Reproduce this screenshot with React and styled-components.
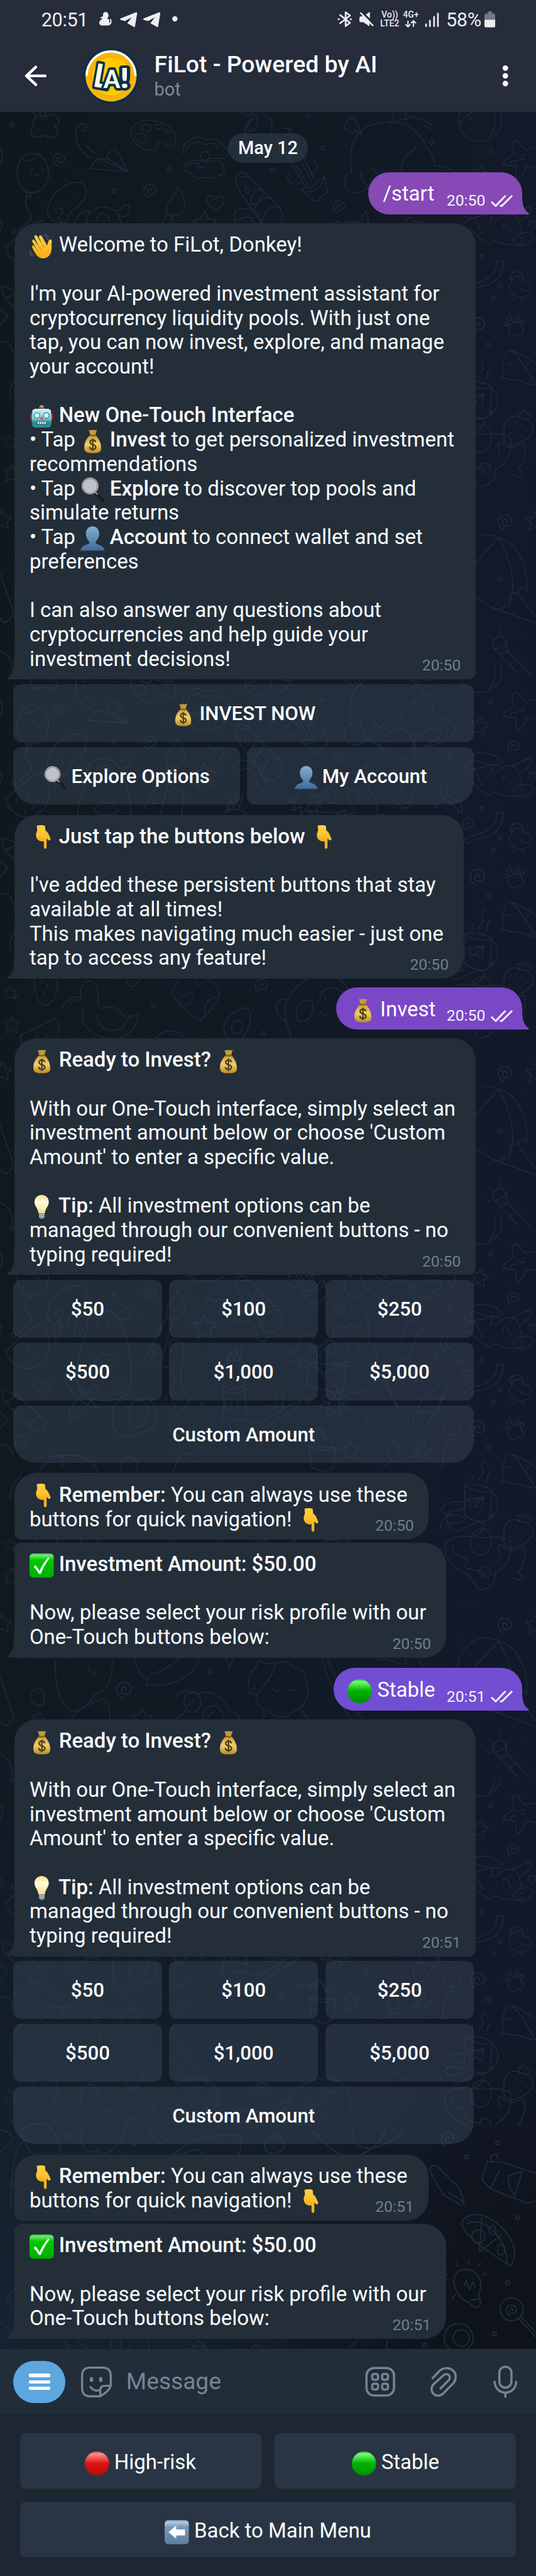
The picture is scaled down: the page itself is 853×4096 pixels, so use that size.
import React from "react";
import styled, { createGlobalStyle } from "styled-components";

const K = 0.8772;
const px = (n) => `${+(n * K).toFixed(3)}px`;

const Global = createGlobalStyle`
  html, body { margin: 0; background: #1d2631; }
  * { box-sizing: border-box; }
  svg { display: block; flex: none; }
`;

const Screen = styled.div`
  width: 853px;
  height: 4096px;
  overflow: hidden;
  display: flex;
  flex-direction: column;
  background: #1d2631;
  color: #fcfdff;
  font-family: Roboto, "Liberation Sans", sans-serif;
`;

/* ---------- header ---------- */
const Header = styled.header`
  height: ${px(203)};
  background: #262c3a;
  flex: none;
`;
const StatusBar = styled.div`
  height: ${px(71)};
  display: flex;
  align-items: center;
  padding: 0 ${px(74)} 0 ${px(75)};
  color: #e9ebef;
`;
const StatusText = styled.span`
  font-size: ${px(35)};
  line-height: ${px(40)};
  letter-spacing: ${(p) => px(p.$tight || 0)};
  width: ${(p) => px(p.$w)};
  white-space: nowrap;
`;
const Spacer = styled.div`
  flex: 1;
`;
const NetStack = styled.div`
  display: flex;
  flex-direction: column;
  align-items: center;
  width: ${(p) => px(p.$w)};
  margin-right: ${(p) => px(p.$gap)};
  font-size: ${px(16)};
  line-height: ${px(15.6)};
  font-weight: 500;
  white-space: nowrap;
`;
const TitleBar = styled.div`
  height: ${px(132)};
  display: flex;
  align-items: center;
  padding: ${px(1)} ${px(50)} 0 ${px(44)};
`;
const Titles = styled.div`
  margin-left: ${px(27)};
  flex: 1;
  white-space: nowrap;
`;
const Title = styled.div`
  font-size: ${px(42.6)};
  line-height: ${px(50)};
  padding-top: ${px(1)};
  font-weight: 500;
`;
const Subtitle = styled.div`
  font-size: ${px(33)};
  line-height: ${px(41)};
  padding-top: ${px(1)};
  color: #7c8b99;
`;

/* ---------- chat ---------- */
const Chat = styled.main`
  position: relative;
  height: ${px(4055)};
  flex: none;
  overflow: hidden;
  display: flex;
  flex-direction: column;
  align-items: flex-start;
  padding-top: ${px(39)};
  background:
    radial-gradient(ellipse 60% 16% at 100% 100%, #0e131a 20%, rgba(14, 19, 26, 0) 100%),
    radial-gradient(ellipse 90% 30% at 0% 100%, #152331 0%, rgba(21, 35, 49, 0) 100%),
    linear-gradient(95deg, #10181e 0%, #111923 45%, #131929 75%, #13182a 100%);
`;
const Wallpaper = styled.svg`
  position: absolute;
  left: 0;
  top: 0;
  width: ${px(972)};
  height: ${px(4055)};
`;
const DatePill = styled.div`
  position: relative;
  align-self: center;
  height: ${px(53)};
  padding: 0 ${px(18.5)};
  border-radius: ${px(27)};
  background: rgba(46, 62, 74, 0.6);
  font-size: ${px(33)};
  line-height: ${px(53)};
  font-weight: 500;
`;
const Bubble = styled.section`
  position: relative;
  display: flex;
  width: ${(p) => px(p.$w)};
  margin: ${(p) => px(p.$mt)} 0 0 ${(p) => (p.$out ? "auto" : px(26))};
  ${(p) => p.$out && `margin-right: ${px(25.5)};`}
  padding: ${(p) => (p.$out ? `${px(16.3)} ${px(17)} ${px(16.3)} ${px(26)}` : `${px(16)} ${px(27)} ${px(16)} ${px(27.5)}`)};
  border-radius: ${(p) => p.$r.map((n) => px(n)).join(" ")};
  background: ${(p) => p.$bg || "#232e39"};
`;
const Body = styled.div`
  flex: 1;
  min-width: 0;
  margin: ${px(1.5)} 0 ${px(-1.5)};
  font-size: ${px(37.6)};
`;
const Line = styled.div`
  height: ${px(44.15)};
  line-height: ${px(44.15)};
  white-space: pre;
  b {
    font-weight: 500;
  }
`;
const Time = styled.span`
  display: flex;
  align-items: center;
  align-self: flex-end;
  margin-bottom: ${px(-5.6)};
  font-size: ${px(28.2)};
  line-height: ${px(28)};
  color: ${(p) => (p.$out ? "#f6f1fb" : "#6f7f8e")};
`;
const TailSvg = styled.svg`
  position: absolute;
  bottom: 0;
  width: ${px(14)};
  height: ${px(40)};
  ${(p) => (p.$out ? `right: ${px(-13)}; transform: scaleX(-1);` : `left: ${px(-13)};`)}
`;
const ButtonGrid = styled.div`
  position: relative;
  display: flex;
  flex-direction: column;
  gap: ${px(9)};
  width: ${px(836)};
  margin: ${px(9)} 0 0 ${px(24)};
`;
const ButtonRow = styled.div`
  display: flex;
  gap: ${px(13)};
`;
const InlineButton = styled.button`
  flex: 1 1 0;
  height: ${px(104.6)};
  display: flex;
  align-items: center;
  justify-content: center;
  border: 0;
  padding: ${px(1.5)} 0 0;
  border-radius: ${px(14)};
  ${(p) => p.$bl && `border-bottom-left-radius: ${px(40)};`}
  ${(p) => p.$br && `border-bottom-right-radius: ${px(40)};`}
  background: rgba(60, 76, 92, 0.42);
  color: #fff;
  font-family: inherit;
  font-size: ${px(35.6)};
  font-weight: 500;
  white-space: pre;
`;

/* ---------- composer and reply keyboard ---------- */
const Composer = styled.footer`
  height: ${px(117)};
  flex: none;
  display: flex;
  align-items: center;
  padding: ${px(2)} ${px(34)} 0 ${px(24)};
  background: #222d3a;
  color: #768593;
`;
const MenuPill = styled.div`
  width: ${px(95)};
  height: ${px(76)};
  border-radius: ${px(38)};
  background: #5ea6de;
  display: flex;
  flex-direction: column;
  align-items: center;
  justify-content: center;
  gap: ${px(5.6)};
`;
const MenuBar = styled.i`
  width: ${px(39)};
  height: ${px(6.2)};
  border-radius: ${px(2)};
  background: #fff;
`;
const Placeholder = styled.div`
  flex: 1;
  margin-left: ${px(25)};
  font-size: ${px(42.3)};
  line-height: ${px(50)};
`;
const Keyboard = styled.div`
  display: flex;
  flex-direction: column;
  gap: ${px(24)};
  padding: ${px(36)} ${px(36)} 0;
`;
const KeyRow = styled.div`
  display: flex;
  gap: ${px(25)};
`;
const Key = styled.button`
  flex: 1 1 0;
  height: ${px(100)};
  display: flex;
  align-items: center;
  justify-content: center;
  border: 0;
  padding: ${px(3.5)} 0 0;
  border-radius: ${px(10)};
  background: #293544;
  color: #fff;
  font-family: inherit;
  font-size: ${px(37.6)};
  white-space: pre;
`;

/* ---------- emoji ---------- */
const EmojiSvg = styled.svg`
  display: inline-block;
  width: 1.17em;
  height: 1.17em;
  margin: -0.3em 0;
  vertical-align: -0.01em;
  overflow: visible;
`;

const art = {
  check: (
    <>
      <rect width="44" height="44" rx="7" fill="url(#gGreenSq)" />
      <path d="M7.5 24.5 10.5 21.5Q15 26 18 32 24 18 34 7L36 9Q26 22 20.500 37H17Q13 29 7.500 24.500Z" fill="#fff" />
    </>
  ),
  green: <circle cx="22" cy="22" r="22" fill="url(#gGreen)" />,
  red: <circle cx="22" cy="22" r="22" fill="url(#gRed)" />,
  left: (
    <>
      <rect width="44" height="44" rx="7" fill="url(#gBlueSq)" />
      <path d="M7 22 21 10V17H37V28H21V34Z" fill="#fff" />
    </>
  ),
  bag: (
    <>
      <path d="M15 1Q18 3.500 22 1.500 26 3.500 30 1L27 11H18Z" fill="#c39a3c" />
      <path d="M18 11C8 19 5 32 8 39 10 43 15 44 22 44S35 43 37 39C39 32 36 19 27 11Z" fill="url(#gGold)" />
      <path d="M17 10.500H28V13.500H17Z" fill="#8c6420" />
      <path d="M27.500 24C27 20.800 24.800 20 22.400 20 19.500 20 17.300 21.600 17.300 24.200 17.300 30 27.800 27 27.800 32.800 27.800 35.500 25.500 37 22.400 37 19.500 37 17.200 35.800 16.800 32.500M22.400 17.300V39.700" fill="none" stroke="#4b3a1c" strokeWidth="2.600" />
    </>
  ),
  lens: (
    <>
      <path d="M25 26 41 42" stroke="#1d1d1f" strokeWidth="6" strokeLinecap="round" />
      <path d="M25 25 31 31" stroke="#8b8f94" strokeWidth="3" />
      <circle cx="17.500" cy="15.500" r="14" fill="#bfc2c8" stroke="#71767d" strokeWidth="2.600" />
      <circle cx="17.500" cy="15.500" r="14.500" fill="none" stroke="#d9dde1" strokeWidth="1" />
    </>
  ),
  person: (
    <path d="M22 0C29 0 34 5 34 13 34 19 31 25 28 27V31C34 34 42 34 44 44H0C2 34 10 34 16 31V27C13 25 10 19 10 13 10 5 15 0 22 0Z" fill="url(#gPerson)" />
  ),
  down: (
    <>
      <path d="M13 1Q21-1 28 1L29 10C33 12 35 17 38 24 39 27 36 28.500 34 27L31 24 31 41Q29 45 26 41V29C18 31 12 25 12 19 11 15 14 12 14 8Z" fill="url(#gHand)" />
      <path d="M17 21V27M21.500 22V29M26 23V30" stroke="#e39a12" strokeWidth="1.200" fill="none" />
    </>
  ),
  bulb: (
    <>
      <path d="M22 0C30 0 35 6 35 13 35 20 28 25 28 33H16C16 25 9 20 9 13 9 6 14 0 22 0Z" fill="url(#gBulb)" />
      <path d="M17 33H27.500L27 41Q22 46 17.500 41Z" fill="#8d8f92" />
      <path d="M17 36H27M17 39H27" stroke="#c9cbce" strokeWidth="1.200" />
    </>
  ),
  wave: (
    <>
      <path d="M14 40C10 34 4 25 4.500 22 6 19 8 21 9 23L13 28 5 14C4 10 8 9 9.500 12L17 23 9 6C8 2 12 1 14 4L23 19 17 6C17 2 21 1 23 5L32 21C33 17 34 10 38 10 42 11 40 16 40 21 41 31 38 41 29 43.500 23 45 18 44 14 40Z" fill="url(#gHand)" />
      <path d="M17 23 21 28M23 19 26 25M13 28 17 33" stroke="#d98e10" strokeWidth="1.300" fill="none" />
      <path d="M25 2Q31 5 34 11M28 0Q33 3 35 7M0 29Q2 36 8 39M0 34Q2 39 5 41" stroke="#55606b" strokeWidth="1.300" fill="none" />
    </>
  ),
  robot: (
    <>
      <path d="M18 8V4Q22-2 26 4V8Z" fill="#f2a52c" />
      <path d="M17 5H27V9H17Z" fill="#69558f" />
      <path d="M2 19Q2 16 5 16V28Q2 28 2 25ZM42 19Q42 16 39 16V28Q42 28 42 25Z" fill="#d2333a" />
      <path d="M5 12Q6 8 12 8H32Q38 8 39 12L40 33Q40 42 33 42H11Q4 42 4 33Z" fill="url(#gRobot)" />
      <circle cx="13.500" cy="20" r="5" fill="#e7ffff" stroke="#20a8bd" strokeWidth="2" />
      <circle cx="30.500" cy="20" r="5" fill="#e7ffff" stroke="#20a8bd" strokeWidth="2" />
      <path d="M22 21 25 27H19Z" fill="#e0453e" />
      <path d="M14 31H30V36H14Z" fill="#e8f5f5" stroke="#2d5c66" strokeWidth="1" />
      <path d="M18 31V36M22 31V36M26 31V36" stroke="#2d5c66" strokeWidth="1.200" />
    </>
  ),
};
const Emoji = ({ n }) => (
  <EmojiSvg viewBox="0 0 44 44" aria-hidden="true">
    {art[n]}
  </EmojiSvg>
);

const Grad = ({ id, stops }) => (
  <linearGradient id={id} x1="0" y1="0" x2="0" y2="1">
    {stops.map(([o, c]) => (
      <stop key={o} offset={o} stopColor={c} />
    ))}
  </linearGradient>
);

/* ---------- wallpaper doodles ---------- */
const Swirl = ({ x, y, s = 1 }) => (
  <path transform={`translate(${x} ${y}) scale(${s})`} d="M-2 12C-10 10-12 0-8-6-3-12 8-10 10-2 11 6 3 9-2 6-5 3-4-2 0-3 3-3 4 0 2 2" />
);
const Star = ({ x, y, s = 1, r = 0 }) => (
  <path transform={`translate(${x} ${y}) rotate(${r}) scale(${s})`} d="M0-17Q2-16 5-6L16-5Q17-3 8 4L11 15Q9 17 0 10L-10 16Q-12 14-7 4L-16-4Q-15-6-5-6Z" />
);
const Heart = ({ x, y, s = 1, r = 0 }) => (
  <path transform={`translate(${x} ${y}) rotate(${r}) scale(${s})`} d="M0 14C-10 8-18 0-15-8-12-15-3-13 0-5 4-14 14-14 16-6 17 2 8 9 0 14Z" />
);
const Dots = ({ at }) => at.map(([x, y]) => <circle key={`${x}-${y}`} cx={x} cy={y} r="3.500" />);

const DoodleTile = () => (
  <g id="doodles">
    <Dots at={[[22, 226], [207, 346], [307, 307], [558, 211], [585, 268], [494, 308], [783, 259], [891, 273], [816, 372], [414, 465], [874, 466], [908, 519], [895, 541], [886, 624], [280, 453], [366, 545], [527, 451], [663, 575], [892, 748], [30, 806], [278, 822], [478, 873], [908, 1050], [382, 1030], [25, 420], [790, 460], [510, 622], [558, 540], [300, 535]]} />
    <Swirl x={107} y={288} />
    <Swirl x={272} y={345} s={1.1} />
    <Swirl x={615} y={374} />
    <Swirl x={931} y={353} />
    <Swirl x={849} y={493} />
    <Swirl x={866} y={588} s={1.3} />
    <Swirl x={474} y={786} s={1.1} />
    <Swirl x={916} y={945} s={1.2} />
    <Swirl x={225} y={1062} s={1.3} />
    <Swirl x={219} y={517} />
    <Swirl x={37} y={613} />
    <Heart x={391} y={367} />
    <Heart x={77} y={513} s={0.9} />
    <Heart x={362} y={775} s={0.8} r={20} />
    <Heart x={338} y={812} s={0.8} r={-20} />
    <Heart x={741} y={500} r={10} />
    <Star x={870} y={315} r={10} />
    <Star x={371} y={405} s={1.3} />
    <Star x={635} y={629} />
    <Star x={765} y={628} r={15} />
    <Star x={21} y={858} s={0.9} />
    <Star x={971} y={945} />
    <Star x={4} y={942} />
    <Star x={258} y={1115} s={1.1} />
    <Star x={18} y={800} s={0.7} />
    {/* broccoli, hooked cane, palette */}
    <path d="M62 203 66 215M72 203 76 216M80 203 85 212M62 226C57 212 72 205 82 212 96 200 112 214 105 226 104 232 96 233 99 226M62 226C53 232 55 247 65 249 72 249 80 244 82 246 92 254 106 248 104 238 102 232 99 228 99 226" />
    <path d="M149 237C160 237 160 222 147 225 134 230 136 255 145 268 150 278 158 284 169 287M156 264 172 279" />
    <path d="M238 244C236 226 256 215 280 219 305 222 322 240 319 254 316 268 306 266 298 260 290 254 286 258 284 266 280 276 266 274 255 267 246 261 239 254 238 244ZM256 232A9 6 0 1 0 275 232 9 6 0 1 0 256 232M246 249A10 7 20 1 0 265 251 10 7 20 1 0 246 249M281 229A6 4 10 1 0 293 230 6 4 10 1 0 281 229M299 237A5 3 10 1 0 309 239 5 3 10 1 0 299 237" />
    {/* paper plane, balloon, cucumber */}
    <path d="M163 306 232 311 210 270 195 278 194 287Q187 291 178 287 168 296 163 306M178 287 232 311 194 286" />
    <path d="M59 278C78 278 88 296 88 314 88 334 76 349 59 349 42 349 30 334 31 314 31 296 41 278 59 278ZM44 291Q54 294 62 287M58 304V313M77 304 76 311M64 316Q68 321 71 316M50 356 47 350 55 349 56 357ZM49 356C38 374 60 384 56 398 52 406 36 408 33 420" />
    <path d="M118 404C84 404 78 384 96 356 112 334 142 324 153 336 162 350 154 366 134 380 124 388 124 392 123 400ZM103 385h1M113 374h1M122 364h1M133 353h1" />
    {/* bird */}
    <path d="M136 405C140 388 152 380 163 383 158 390 160 398 150 412 140 430 130 426 136 405M163 387C176 368 214 370 220 405 236 430 240 460 236 520 230 545 150 545 145 520 130 480 150 440 160 400M210 380C228 384 220 368 232 372 242 382 230 398 216 391M176 400A10 12 0 0 1 198 400M170 470Q190 485 216 470M170 470C180 450 205 450 214 470" />
    {/* clam and croissant */}
    <path d="M333 279C328 260 344 254 348 252 360 244 370 252 374 254 388 248 402 256 402 264 414 268 420 278 410 284 404 290 394 286 380 287M338 276C336 262 352 260 354 258 362 254 368 262 373 262 386 254 396 266 396 270M364 283A8 8 0 1 1 380 283 8 8 0 1 1 364 283M333 304C336 290 352 290 364 291 378 298 392 286 402 296 410 308 408 318 396 318 386 326 374 320 368 322 356 326 350 318 346 314 338 312 332 308 333 304M340 302C344 296 356 294 362 296 352 304 362 304 370 302" />
    <path d="M430 318C436 308 448 314 454 322L498 366C510 376 516 390 510 402 496 426 480 416 468 396L432 342Q426 328 430 318ZM444 344A5 5 0 1 0 454 344 5 5 0 1 0 444 344M456 370C450 356 466 350 462 344 472 338 482 350 474 356 470 370 460 372 456 370M462 380C466 364 482 356 488 360M476 402C478 384 490 370 506 376M436 322Q448 318 456 324" />
    {/* cactus */}
    <path d="M546 342 566 340Q586 318 590 322L594 348 577 363 570 365ZM546 342C546 348 560 352 574 342 586 334 590 326 586 318M554 338 526 292C520 276 540 264 546 276L572 328M546 330C524 344 516 318 526 312M562 310C576 318 580 300 570 292M538 300 560 336M548 296 566 330" />
    {/* soft serve */}
    <path d="M438 203C444 215 460 212 460 203M456 205C476 212 468 240 452 238 446 232 450 222 460 216M478 208C500 216 496 240 484 256 470 262 448 262 445 240 442 224 452 220 460 214M512 232 528 234Q520 252 504 256" />
    {/* whale */}
    <path d="M638 316C630 270 640 222 706 221 742 222 762 240 775 268 784 276 788 290 788 300M638 311C618 318 622 350 642 350 660 350 668 340 674 334M788 301C812 300 826 310 826 318 826 336 800 350 768 354M706 226C716 218 714 210 714 203M718 220C730 212 726 218 738 216 738 210 736 206 735 203M656 243C650 230 648 218 640 214 628 216 624 226 626 234 632 228 632 244 642 240 644 232 648 244 656 243M742 212Q766 214 783 226M770 228 784 234M728 312C728 292 736 276 754 272M754 266 746 276M654 312C656 334 676 348 690 352M676 304Q684 320 700 322M706 330C712 316 740 316 744 336 750 350 758 362 750 376 736 382 708 374 704 358M694 310 706 318M704 346C694 340 684 346 692 352 684 356 692 360 704 360M742 336C754 322 760 330 750 342 756 352 752 360 746 350M756 344 770 326C784 316 800 320 800 330 798 342 780 346 768 354" />
    {/* brush and bolt */}
    <path d="M304 384C296 366 320 356 321 340 334 350 340 374 330 386 320 392 308 390 304 384M304 384 260 470M314 390 290 480M300 388 314 394M548 420 530 470 546 462 544 480 578 440 562 444 572 418Z" />
    {/* beach ball, starfish */}
    <circle cx="871" cy="217" r="39" />
    <path d="M834 225Q842 208 858 203M896 203Q902 232 888 250M848 208 856 216" />
    <path d="M929 261Q930 252 939 257L953 272Q960 270 972 268M929 261 932 279Q914 290 913 298 924 300 936 302C934 316 938 328 943 321 950 316 954 306 954 300L972 304M925 295Q932 290 938 292M938 282v3M950 279v3M944 288q4 3 8-1" />
    {/* napping figure in a hat */}
    <path d="M855 374C856 358 905 364 911 382 908 392 868 384 855 374ZM855 374C858 398 838 380 843 392 846 400 880 390 888 386M860 394C830 410 836 410 858 420 876 436 890 450 896 436 920 446 940 446 950 440M860 394C872 412 868 420 878 425M888 405C896 396 892 386 888 386M896 402C910 396 920 378 940 396 944 406 942 416 950 424M920 388C934 392 954 372 963 376 968 384 950 398 944 402M914 412C910 400 928 408 926 424M932 438C930 420 970 416 966 432 962 446 942 450 932 438ZM962 410C954 402 964 394 966 404 972 394 976 406 966 416M942 430q4 5 9 0" />
    {/* ribbons */}
    <path d="M808 413C796 430 796 446 818 458 830 464 832 468 831 473L838 473C840 454 828 450 816 444 806 436 808 428 815 420ZM901 474 912 473C916 496 900 512 880 518 860 522 856 522 848 530L842 524C854 508 866 518 886 504 898 496 902 486 901 474Z" />
    <path d="M802 660C806 640 800 632 812 610M790 575C800 560 792 545 804 530" />
    {/* chick, paw, shark */}
    <path d="M929 507C934 496 948 500 950 510 962 510 966 520 962 532 954 542 930 542 925 526 922 514 928 510 931 511 920 504 926 496 932 494 938 490 948 494 950 504M924 504 930 506M944 522Q952 532 960 524M932 540V546M948 539V546M936 501h1" />
    <path d="M923 595C924 582 944 578 946 592 954 600 948 608 938 606 928 614 920 606 923 595M914 588a4 3 0 1 0 8 0 4 3 0 1 0-8 0M920 577a4 5 0 1 0 8 0 4 5 0 1 0-8 0M934 576a4 5 0 1 0 8 0 4 5 0 1 0-8 0M943 583a4 3 0 1 0 8 0 4 3 0 1 0-8 0" />
    <path d="M972 698C950 696 944 686 930 690 920 686 916 684 907 687M912 684C910 660 914 640 924 636 940 636 958 650 972 660M930 638C946 650 960 680 972 697M918 658Q924 664 930 656M960 656 957 662" />
    {/* mug with steam */}
    <path d="M844 692C850 688 890 694 893 704L888 754C880 762 850 756 842 744ZM844 692C856 704 880 706 893 704M892 706C908 712 908 744 889 750M846 718 878 714 874 736 862 730 853 733 852 724ZM852 724 878 714 862 730M858 684C852 680 862 676 856 672M870 684C866 676 884 668 874 662 872 656 876 652 879 650M882 688C888 682 880 676 890 668" />
    {/* strawberry, cats */}
    <path d="M914 790C912 760 926 748 944 758 962 756 970 776 966 784 954 800 930 812 916 802ZM944 758C936 748 942 744 946 750 946 742 950 740 954 750 964 748 968 752 958 760M924 770v2M936 766v2M948 772v2M926 784v2M940 782v2M956 780v2M932 794v2M946 790v2" />
    <path d="M816 748C790 740 800 722 834 722 850 724 842 738 830 738 810 736 800 760 826 776 840 776 856 756 878 760 880 770 870 782 860 784M808 800C820 780 852 784 876 788 900 784 905 786 926 792 930 820 920 840 900 850 890 860 910 866 880 880 860 890 866 860 840 850 812 838 806 820 808 800M856 790a18 20 0 1 0 34 10 18 20 0 1 0-34-10M906 820C900 800 908 796 914 806L926 812 950 804C956 820 950 840 940 850 955 860 950 870 930 860M820 802C826 830 846 816 848 830 830 850 870 840 880 856M870 850a10 10 0 1 0 20 0 10 10 0 1 0-20 0" />
    {/* umbrella, flashlight */}
    <path d="M825 1055C826 990 860 955 906 975 945 985 960 1040 955 1072 948 1060 940 1066 940 1076 930 1070 920 1080 925 1095 912 1100 905 1110 890 1100L825 1055M905 975C870 1010 850 1040 825 1055M905 975C930 1020 935 1060 925 1095M890 1100 972 1130M940 1076 972 1120" />
    <path d="M895 1175C890 1160 905 1145 916 1160L920 1180 962 1222M895 1175 908 1186 940 1222M895 1175Q912 1178 920 1160M908 1186 922 1180M926 1204 938 1196M908 1150 909 1140M894 1158 888 1152M882 1174 888 1176" />
    {/* pencil, carrot */}
    <path d="M3 518 8 540 60 592Q76 602 84 590L80 574 30 528ZM8 540Q20 540 30 528M54 588Q60 570 74 568" />
    <path d="M120 490C140 500 160 540 178 552M178 552C150 550 130 530 116 496M124 560C140 530 160 520 180 510 170 540 150 560 130 574ZM10 450C30 430 60 400 76 400 98 430 92 460 70 474 50 488 20 480 10 450ZM30 448v6M50 440v6M60 460v6M46 470v4" />
    <path d="M100 380C120 370 116 390 104 396 120 400 110 414 104 430M100 430 98 410" />
    {/* egg, flask, thunder cloud, llama and guitar */}
    <path d="M205 570C200 540 230 530 250 536 280 530 290 560 280 580 280 600 250 590 240 606 220 606 200 596 205 570ZM236 560a16 18 0 1 0 30 4 16 18 0 1 0-30-4M246 562v4M258 560v4M248 572q5 5 9-1" />
    <path d="M306 440C310 420 330 430 334 446 330 480 320 510 340 530 350 540 330 560 310 570 300 600 320 610 345 590M296 480C310 470 322 490 312 520 306 540 322 550 320 560" />
    <path d="M426 400C420 378 436 376 450 380 466 376 474 396 476 410L486 420C488 430 478 434 470 430 466 428 464 426 466 416L456 396C446 390 440 396 426 400Z" />
    <path d="M410 460 430 440M414 470 420 450 424 468 430 446 434 466 440 440M406 480C400 466 448 460 446 480 444 500 440 530 450 560L440 560M406 500C404 530 410 560 402 580M406 512Q424 524 446 510M406 520Q424 532 446 518M408 540 412 560M420 540V560M430 540 434 560M416 580C440 560 460 590 480 576L520 550 545 540C540 560 520 560 500 575 480 590 450 620 420 600Z" />
    <path d="M486 530C486 520 500 520 500 530V552M500 530 514 524V546M486 552a5 4 0 1 0 10 0 5 4 0 1 0-10 0M504 548a5 4 0 1 0 10 0 5 4 0 1 0-10 0" />
    {/* dinosaur, envelope, flower, bone */}
    <path d="M574 472C572 440 590 430 606 420 604 404 612 392 622 410 630 398 644 400 650 406L664 382C672 400 666 420 668 430 690 450 690 500 670 520 650 530 600 530 574 472ZM600 430a10 13 0 1 0 0 26 10 13 0 1 0 0-26M640 432a10 14 0 1 0 0 28 10 14 0 1 0 0-28M606 470q16 12 40 2" />
    <path d="M560 470 610 474 628 468 622 526 556 512ZM560 470 588 490 628 468M582 466C576 450 590 440 596 450" />
    <path d="M597 545a10 10 0 1 0 20 0 10 10 0 1 0-20 0M600 536C588 520 600 514 607 533 612 512 622 518 615 536 634 524 638 536 620 546 638 550 636 560 616 554 624 570 610 574 606 556 596 574 586 564 598 552 576 556 576 544 596 544 576 536 586 524 600 536" />
    <path d="M736 410C730 394 750 390 754 402 770 398 772 416 758 418L744 448C750 462 734 472 726 458 712 462 712 444 724 442Z" />
    <path d="M680 500C670 480 690 470 700 480 710 500 694 512 690 504M694 504 722 550M700 500 718 548M770 530 798 510C810 500 814 520 806 530L770 590C756 600 744 580 752 566ZM764 534Q780 530 806 536M756 560Q776 556 790 566" />
    <path d="M530 600 572 598 590 604 580 590 560 596M560 622 566 660 588 668 604 660 610 624ZM560 622C574 630 598 632 610 624M572 618C556 600 570 594 576 612 570 580 588 576 590 612 600 590 614 596 600 618M806 590C800 560 830 560 836 580 830 610 814 604 806 590M820 600 824 620M690 660C720 650 730 630 718 612 700 610 696 640 714 650 740 650 760 630 770 620" />
    {/* left margin leaf shapes */}
    <path d="M0 270C10 280 0 290 0 300M0 420Q8 410 0 400M0 560 14 572 0 590M0 620Q18 615 24 640M0 1040 25 1110Q10 1140 0 1120M0 1180Q26 1190 22 1223" />
    <path d="M60 690C80 640 90 660 95 640 112 630 118 650 112 660M90 640C120 640 180 620 182 700M310 690C316 650 330 620 350 640M220 660a15 18 0 1 0 30 0 15 18 0 1 0-30 0M40 670Q15 700 18 720" />
    {/* lizard and stork row */}
    <path d="M62 760C60 800 70 830 88 820 106 810 108 780 98 760M76 776v6M86 784v6M80 798v6" />
    <path d="M112 828C124 806 136 806 148 808 140 784 160 770 174 784 184 800 170 824 184 828 206 820 220 830 226 846L250 840C252 860 230 884 204 884 170 880 140 860 152 826M176 838C174 860 196 876 222 864 230 854 228 848 240 840M128 818 148 810" />
    <path d="M312 800C320 770 340 764 350 770 372 764 392 780 398 800 396 820 376 836 364 850 340 836 322 820 312 800ZM372 840C368 820 380 810 390 808M228 760C224 780 240 800 250 780 260 770 262 764 258 760" />
    <path d="M406 864C410 840 430 830 446 826 460 830 454 860 442 880 424 892 408 884 406 864ZM420 862a10 12 0 1 0 20 0 10 12 0 1 0-20 0" />
    <path d="M518 850C490 840 500 800 522 814 530 790 560 764 600 768 628 774 640 800 634 830M518 820C516 850 524 880 540 900M540 850C530 830 550 804 566 816 572 840 556 858 540 850ZM580 812C580 788 610 786 622 800M582 835q6 10 14 2M556 820v5M590 808v5" />
    <path d="M36 878 98 846C110 850 108 862 104 880M44 900Q40 890 36 878M66 876a8 8 0 1 0 18 0M276 890C290 862 330 862 340 890M296 880v2M310 874v2M320 884v2" />
    <path d="M696 776C702 760 714 770 716 758 726 760 724 772 736 766M800 772C796 744 830 742 842 752 844 764 826 760 812 762" />
    {/* sheep and snail row */}
    <path d="M100 1010C100 1060 110 1096 134 1102 160 1096 166 1080 172 1072 196 1066 204 1040 204 1008M160 1020C164 1038 176 1040 174 1024M56 1070C66 1050 84 1060 80 1090 68 1094 52 1088 56 1070" />
    <path d="M242 1000C248 1030 256 1040 270 1044L264 1054C310 1060 350 1040 362 1008M274 1034C300 1030 320 1010 330 1002M408 1000 416 1024 426 1000" />
    <path d="M450 1060C450 1040 456 1030 466 1020 462 1010 474 1008 476 1014 486 1018 500 1010 498 1020 496 1040 480 1050 470 1070 456 1074 448 1068 450 1060ZM498 1020C510 1004 530 1016 534 1024 556 1020 556 1050 558 1060 562 1090 540 1100 530 1104 520 1118 490 1110 486 1100 470 1100 460 1080 466 1072M456 1060q4 6 7-2M480 1106 476 1120M546 1100 560 1118M520 1060q10 10 16-2M494 1060q6 10 12 4" />
    <path d="M320 1076C320 1066 340 1062 360 1070 390 1060 412 1086 416 1100 434 1106 438 1116 430 1130M334 1086a15 18 0 1 0 30 0 15 18 0 1 0-30 0M368 1112a18 20 0 1 0 36 0 18 20 0 1 0-36 0M310 1130C316 1110 330 1116 336 1100M376 1112 390 1102M340 1092 350 1082" />
    <path d="M126 1130C130 1100 160 1090 184 1080 198 1080 200 1110 202 1130M136 1120a10 12 0 1 0 20 0M156 1120a14 16 0 1 0 26 0M56 1130C60 1100 78 1100 80 1120" />
    <path d="M682 1010C700 1000 720 1020 738 1016 736 1004 730 1000 726 1000M584 1003C590 1040 630 1120 660 1140M594 1003C600 1040 660 1120 674 1140M760 1010 780 1040" />
  </g>
);

const FooterDoodles = () => (
  <g stroke="#20303e">
    <Dots at={[[121, 3872], [244, 3885], [903, 3884], [846, 3910], [939, 4020], [921, 4138], [897, 4230], [770, 4251], [22, 3960]]} />
    <Swirl x={812} y={3876} s={1.1} />
    <path d="M60 3905C30 3870 30 3850 70 3850 100 3850 110 3890 112 3906M20 4000C20 3920 30 3880 50 3878M0 3860C30 3870 30 3880 0 3900M150 3860C140 3890 160 3905 178 3900 200 3915 220 3880 228 3860M270 3860C280 3900 310 3885 310 3860M315 3905C340 3880 380 3868 430 3870 445 3875 436 3890 434 3905M330 3904 356 3896 370 3904M480 3890C480 3865 516 3865 516 3890 512 3905 480 3910 480 3890M562 3860C600 3890 600 3905 640 3910 680 3900 690 3880 700 3860M640 3860Q630 3890 670 3895 720 3885 730 3860" />
    <path d="M780 3932C790 3910 810 3950 828 3960 840 3975 840 3990 842 3998M780 3932C784 3950 800 3970 806 3980M806 3980 838 3998M814 3974 842 3992M884 3918 912 3920 972 3940M884 3918 874 3950 890 3968 958 3994 972 3990M890 3968 906 3934M922 3944 948 3936 940 3960 934 3980 924 3964ZM891 3920V3908L900 3904 904 3916" />
    <path d="M838 4032C840 4010 880 4006 908 4036 934 4060 940 4090 926 4108 900 4090 846 4060 838 4032ZM846 4032C870 4014 920 4050 920 4104M874 4020 870 4082 910 4050M856 4054a12 12 0 1 0 24 0 12 12 0 1 0-24 0M888 4044a6 6 0 1 0 11-2 6 6 0 1 0-11 2M904 4078a6 6 0 1 0 10 0 6 6 0 1 0-10 0" />
    <path d="M840 4168C820 4150 816 4120 840 4114 866 4110 880 4140 868 4156L872 4176C868 4184 860 4186 854 4176ZM854 4170 872 4166M842 4144 846 4134 852 4150 858 4136 862 4146M850 4102V4096M830 4108 828 4102M868 4108 872 4102M826 4160 820 4166M876 4124 882 4120M812 4124 806 4120" />
    <path d="M907 4186a21 21 0 1 0 42 0 21 21 0 1 0-42 0M946 4200 972 4228M942 4204 972 4236" />
    <Swirl x={928} y={4187} s={0.9} />
    <circle cx="832" cy="4238" r="26" />
    <circle cx="837" cy="4238" r="15" />
    <path d="M116 4243 128 4260M140 4243 160 4260M202 4243V4260M220 4243V4260M236 4243V4260M264 4243Q274 4250 270 4260M344 4260 360 4243 378 4260M352 4254H372M632 4258 648 4242M704 4260Q698 4250 704 4242M456 4258C460 4250 472 4250 476 4258M0 4210Q22 4220 22 4240M14 4170C14 4150 26 4160 26 4150M14 4170 26 4180" />
  </g>
);

const ChatWallpaper = () => (
  <Wallpaper viewBox="0 203 972 4055" preserveAspectRatio="none" fill="none" stroke="#1e2939" strokeWidth="1.900" strokeLinecap="round" strokeLinejoin="round">
    <defs>
      <clipPath id="tileClip">
        <rect x="0" y="203" width="972" height="1020" />
      </clipPath>
      <clipPath id="shortClip">
        <rect x="0" y="223" width="972" height="630" />
      </clipPath>
    </defs>
    <g clipPath="url(#tileClip)">
      <DoodleTile />
    </g>
    <g transform="translate(0 1000)">
      <g clipPath="url(#tileClip)">
        <use href="#doodles" />
      </g>
    </g>
    <g transform="translate(0 2000)">
      <g clipPath="url(#tileClip)">
        <use href="#doodles" />
      </g>
    </g>
    <g transform="translate(0 3000)">
      <g clipPath="url(#shortClip)">
        <use href="#doodles" />
      </g>
    </g>
    <FooterDoodles />
  </Wallpaper>
);

/* ---------- message pieces ---------- */
const Tail = ({ out, fill = "#232e39" }) => (
  <TailSvg $out={out} viewBox="0 0 14 40" aria-hidden="true">
    <path d="M14 0H13C13 20 11 31 1.500 37 0 38.500 1 40 3 40H14Z" fill={fill} />
  </TailSvg>
);

const Incoming = ({ w, mt, r, time, tail = true, children }) => (
  <Bubble $w={w} $mt={mt} $r={r}>
    {tail && <Tail />}
    <Body>{children}</Body>
    <Time>{time}</Time>
  </Bubble>
);

const ReadTicks = styled.svg`
  width: ${px(40)};
  height: ${px(22)};
  margin-left: ${px(9.5)};
`;

const Outgoing = ({ w, mt, bg, time, children }) => (
  <Bubble $out $w={w} $mt={mt} $bg={bg} $r={[38, 38, 0, 38]}>
    <Tail out fill={bg} />
    <Body>
      <Line>{children}</Line>
    </Body>
    <Time $out>
      {time}
      <ReadTicks viewBox="0 0 40 22" fill="none" stroke="#f6f1fb" strokeWidth="3.200" strokeLinecap="round" strokeLinejoin="round">
        <path d="M2 13 9 20 26 2M18 19.500 20 20 38 2" />
      </ReadTicks>
    </Time>
  </Bubble>
);

const InvestPrompt = ({ mt, time }) => (
  <>
    <Incoming w={837} mt={mt} r={[40, 40, 13, 0]} time={time}>
      <Line><Emoji n="bag" /><b> Ready to Invest? </b><Emoji n="bag" /></Line>
      <Line />
      <Line>With our One-Touch interface, simply select an</Line>
      <Line>investment amount below or choose 'Custom</Line>
      <Line>Amount' to enter a specific value.</Line>
      <Line />
      <Line><Emoji n="bulb" /><b> Tip:</b> All investment options can be</Line>
      <Line>managed through our convenient buttons - no</Line>
      <Line>typing required!</Line>
    </Incoming>
    <ButtonGrid>
      <ButtonRow>
        <InlineButton>$50</InlineButton>
        <InlineButton>$100</InlineButton>
        <InlineButton>$250</InlineButton>
      </ButtonRow>
      <ButtonRow>
        <InlineButton>$500</InlineButton>
        <InlineButton>$1,000</InlineButton>
        <InlineButton>$5,000</InlineButton>
      </ButtonRow>
      <ButtonRow>
        <InlineButton $bl $br>Custom Amount</InlineButton>
      </ButtonRow>
    </ButtonGrid>
    <Incoming w={752} mt={18.5} r={[40, 40, 40, 13]} time={time} tail={false}>
      <Line><Emoji n="down" /><b> Remember:</b> You can always use these</Line>
      <Line>buttons for quick navigation! <Emoji n="down" /></Line>
    </Incoming>
    <Incoming w={783} mt={5.3} r={[13, 40, 40, 0]} time={time}>
      <Line><Emoji n="check" /><b> Investment Amount: $50.00</b></Line>
      <Line />
      <Line>Now, please select your risk profile with our</Line>
      <Line>One-Touch buttons below:</Line>
    </Incoming>
  </>
);

const Avatar = () => (
  <svg width={px(102)} height={px(102)} viewBox="0 0 100 100">
    <circle cx="50" cy="50" r="50" fill="#07304a" />
    <circle cx="50" cy="50" r="45.500" fill="#f9b40c" />
    <path d="M6.500 50A43.500 43.500 0 0 1 93.500 50" fill="none" stroke="#fff" strokeWidth="4" />
    <circle cx="50" cy="51" r="35" fill="#fecb00" stroke="#f8a90e" strokeWidth="2" />
    <g fontFamily="Lato, Roboto, sans-serif" fontWeight="900" fill="#fbfbea" stroke="#07304a" strokeWidth="9" strokeLinejoin="round" style={{ paintOrder: "stroke" }}>
      <text x="20" y="71" fontSize="58" transform="rotate(10 32 50)" textLength="27" lengthAdjust="spacingAndGlyphs">L</text>
      <text x="65" y="72" fontSize="49" textLength="18" lengthAdjust="spacingAndGlyphs">!</text>
      <text x="37" y="71" fontSize="45" textLength="29" lengthAdjust="spacingAndGlyphs">A</text>
    </g>
  </svg>
);

const LeftStatusIcons = () => (
  <svg width={px(150)} height={px(34)} viewBox="178 19 150 34" fill="#eceef2">
    <path d="M187 27C187 22 195 20 197 27 198 31 195 33 195 34 199 36 199 40 198 43L201 40 199 36 202 35V38C204 40 202 45 197 47H184C178 44 180 39 184 36L186 34 181 33 187 30Z" />
    <path d="M219 34 247 23Q249 23 249 25L245 49Q244 51 242 49L231 43 239 32 227 39 219 37Q217 35 219 34Z" />
    <path d="M261 34 289 23Q291 23 291 25L287 49Q286 51 284 49L273 43 281 32 269 39 261 37Q259 35 261 34Z" />
    <circle cx="317.500" cy="35" r="4.800" />
  </svg>
);

const BackArrow = styled.svg`
  width: ${px(40)};
  height: ${px(38)};
  margin-right: ${px(67)};
`;
const RadioIcons = styled.svg`
  width: ${px(76)};
  height: ${px(34)};
  margin-right: ${px(2)};
`;
const SignalIcon = styled.svg`
  width: ${px(28)};
  height: ${px(30)};
  margin-right: ${px(12)};
`;
const ComposerIcon = styled.svg`
  width: ${(p) => px(p.$w)};
  height: ${(p) => px(p.$h)};
  margin-left: ${(p) => px(p.$ml || 0)};
`;

export default function App() {
  return (
    <Screen>
      <Global />
      <svg width="0" height="0" style={{ position: "absolute" }} aria-hidden="true">
        <defs>
          <Grad id="gGreen" stops={[["0", "#1fb81f"], ["0.1", "#74ff74"], ["0.48", "#00b400"], ["1", "#008c00"]]} />
          <Grad id="gRed" stops={[["0", "#e0423c"], ["0.1", "#ff8f8a"], ["0.48", "#e01414"], ["1", "#a80f0f"]]} />
          <Grad id="gGreenSq" stops={[["0", "#3fbf3f"], ["0.08", "#72e872"], ["0.28", "#00c800"], ["1", "#00ad00"]]} />
          <Grad id="gBlueSq" stops={[["0", "#6d8fae"], ["0.08", "#b4cbe0"], ["0.3", "#7599bd"], ["1", "#5c7f9f"]]} />
          <Grad id="gGold" stops={[["0", "#c69a33"], ["0.5", "#f0cf68"], ["1", "#b98a26"]]} />
          <Grad id="gPerson" stops={[["0", "#7fb0d3"], ["1", "#41699b"]]} />
          <Grad id="gHand" stops={[["0", "#ffd046"], ["1", "#fbae14"]]} />
          <Grad id="gBulb" stops={[["0", "#f5e08c"], ["0.4", "#fffbe0"], ["1", "#f3dd8e"]]} />
          <Grad id="gRobot" stops={[["0", "#d9f3f2"], ["0.5", "#8fc9ce"], ["0.75", "#2a8191"], ["1", "#2f93a0"]]} />
        </defs>
      </svg>

      <Header>
        <StatusBar>
          <StatusText $w={103} $tight={-0.5}>20:51</StatusText>
          <LeftStatusIcons />
          <Spacer />
          <RadioIcons viewBox="608 19 76 34" fill="none" stroke="#eceef2" strokeWidth="3" strokeLinejoin="round" strokeLinecap="round">
            <path d="M614 28 632 42 624 48V23L632 29 614 43M611 35.500h1M633 35.500h1" />
            <path d="M649 33.500Q649 30.500 652 30.500H656L668 22V40L667 48.500 656 41H652Q649 41 649 38Z" fill="#eceef2" stroke="none" />
            <path d="M653 22 677 46" stroke="#262c3a" strokeWidth="3.500" />
            <path d="M651.500 24.500 673.500 47" strokeWidth="2.800" />
          </RadioIcons>
          <NetStack $w={37} $gap={6}>
            <span>Vo))</span>
            <span>LTE2</span>
          </NetStack>
          <NetStack $w={28} $gap={10}>
            <span>4G+</span>
            <svg width={px(22)} height={px(15.6)} viewBox="0 0 22 15" fill="none" stroke="#eceef2" strokeWidth="2.200">
              <path d="M6 2V13M1.500 8.500 6 13 10.500 8.500M16 13V2M11.500 6.500 16 2 20.500 6.500" />
            </svg>
          </NetStack>
          <SignalIcon viewBox="0 0 28 30" stroke="#eceef2" strokeWidth="3" strokeLinecap="round">
            <path d="M3.500 23.500V27M10.500 17V27M18 10V27M25 4V27" />
          </SignalIcon>
          <StatusText $w={69} $tight={-0.5}>58%</StatusText>
          <svg width={px(20)} height={px(30)} viewBox="0 0 20 30">
            <path d="M0 15V8Q0 4 4 4H6V2Q6 0 8 0H12Q14 0 14 2V4H16Q20 4 20 8V15Z" fill="#73787f" />
            <path d="M0 15H20V26Q20 29 17 29H3Q0 29 0 26Z" fill="#eceef2" />
          </svg>
        </StatusBar>
        <TitleBar>
          <BackArrow viewBox="0 0 40 38" fill="none" stroke="#fff" strokeWidth="5" strokeLinecap="round" strokeLinejoin="round">
            <path d="M20.500 3 3.500 19 20.500 35M4 19H37.500" />
          </BackArrow>
          <Avatar />
          <Titles>
            <Title>FiLot - Powered by AI</Title>
            <Subtitle>bot</Subtitle>
          </Titles>
          <svg width={px(12)} height={px(40)} viewBox="0 0 12 40" fill="#fff">
            <circle cx="6" cy="6" r="5" />
            <circle cx="6" cy="20" r="5" />
            <circle cx="6" cy="34" r="5" />
          </svg>
        </TitleBar>
      </Header>

      <Chat>
        <ChatWallpaper />
        <DatePill>May 12</DatePill>
        <Outgoing w={278.5} mt={17} bg="#8649b5" time="20:50">/start</Outgoing>

        <Incoming w={837} mt={16} r={[40, 40, 13, 0]} time="20:50">
          <Line><Emoji n="wave" /> Welcome to FiLot, Donkey!</Line>
          <Line />
          <Line>I'm your AI-powered investment assistant for</Line>
          <Line>cryptocurrency liquidity pools. With just one</Line>
          <Line>tap, you can now invest, explore, and manage</Line>
          <Line>your account!</Line>
          <Line />
          <Line><Emoji n="robot" /><b> New One-Touch Interface</b></Line>
          <Line>• Tap <Emoji n="bag" /><b> Invest</b> to get personalized investment</Line>
          <Line>recommendations</Line>
          <Line>• Tap <Emoji n="lens" /><b> Explore</b> to discover top pools and</Line>
          <Line>simulate returns</Line>
          <Line>• Tap <Emoji n="person" /><b> Account</b> to connect wallet and set</Line>
          <Line>preferences</Line>
          <Line />
          <Line>I can also answer any questions about</Line>
          <Line>cryptocurrencies and help guide your</Line>
          <Line>investment decisions!</Line>
        </Incoming>
        <ButtonGrid>
          <ButtonRow>
            <InlineButton><span><Emoji n="bag" /> INVEST NOW</span></InlineButton>
          </ButtonRow>
          <ButtonRow>
            <InlineButton $bl><span><Emoji n="lens" /> Explore Options</span></InlineButton>
            <InlineButton $br><span><Emoji n="person" /> My Account</span></InlineButton>
          </ButtonRow>
        </ButtonGrid>

        <Incoming w={815} mt={18.5} r={[40, 40, 40, 0]} time="20:50">
          <Line><Emoji n="down" /><b> Just tap the buttons below </b><Emoji n="down" /></Line>
          <Line />
          <Line>I've added these persistent buttons that stay</Line>
          <Line>available at all times!</Line>
          <Line>This makes navigating much easier - just one</Line>
          <Line>tap to access any feature!</Line>
        </Incoming>

        <Outgoing w={336.5} mt={16} bg="#7a47c6" time="20:50"><Emoji n="bag" /> Invest</Outgoing>
        <InvestPrompt mt={15.5} time="20:50" />
        <Outgoing w={342} mt={19.2} bg="#724ed3" time="20:51"><Emoji n="green" /> Stable</Outgoing>
        <InvestPrompt mt={16.3} time="20:51" />
      </Chat>

      <Composer>
        <MenuPill>
          <MenuBar />
          <MenuBar />
          <MenuBar />
        </MenuPill>
        <ComposerIcon $w={58} $h={58} $ml={27} viewBox="0 0 58 58" fill="none" stroke="currentColor" strokeWidth="3.800" strokeLinecap="round" strokeLinejoin="round">
          <path d="M36 55H18Q3 55 3 40V18Q3 3 18 3H40Q55 3 55 18V36Q52 46 36 55V44Q36 36 44 36H55M18 38Q26 48 36 43" />
          <path d="M20 23V26M37 23V26" strokeWidth="6" />
        </ComposerIcon>
        <Placeholder>Message</Placeholder>
        <ComposerIcon $w={55} $h={55} viewBox="0 0 55 55" fill="none" stroke="currentColor" strokeWidth="4">
          <rect x="2.500" y="2.500" width="50" height="50" rx="14" />
          <rect x="13" y="13.500" width="10.500" height="10.500" rx="3" />
          <rect x="31" y="13.500" width="10.500" height="10.500" rx="3" />
          <rect x="13" y="31" width="10.500" height="10.500" rx="3" />
          <rect x="31" y="31" width="10.500" height="10.500" rx="3" />
        </ComposerIcon>
        <ComposerIcon $w={50} $h={56} $ml={62} viewBox="0 0 50 56" fill="none" stroke="currentColor" strokeWidth="4" strokeLinecap="round">
          <path d="M5 21 17 8.500C24 1 36 1 42.500 7.500 49 14 48 25 41.500 31.500L24 49C19 54 11 54 6.500 49 2 44.500 2 37 7 32L25 15.500C33 10 40 19 34 25L19.500 39.500" />
        </ComposerIcon>
        <ComposerIcon $w={44} $h={60} $ml={65} viewBox="0 0 44 60" fill="none" stroke="currentColor" strokeWidth="4" strokeLinecap="round">
          <rect x="11" y="2.500" width="22" height="38" rx="11" />
          <path d="M2.500 30C4 56 40 56 41.500 30M22 50V57" />
        </ComposerIcon>
      </Composer>

      <Keyboard>
        <KeyRow>
          <Key><span><Emoji n="red" /> High-risk</span></Key>
          <Key><span><Emoji n="green" /> Stable</span></Key>
        </KeyRow>
        <KeyRow>
          <Key><span><Emoji n="left" /> Back to Main Menu</span></Key>
        </KeyRow>
      </Keyboard>
    </Screen>
  );
}
